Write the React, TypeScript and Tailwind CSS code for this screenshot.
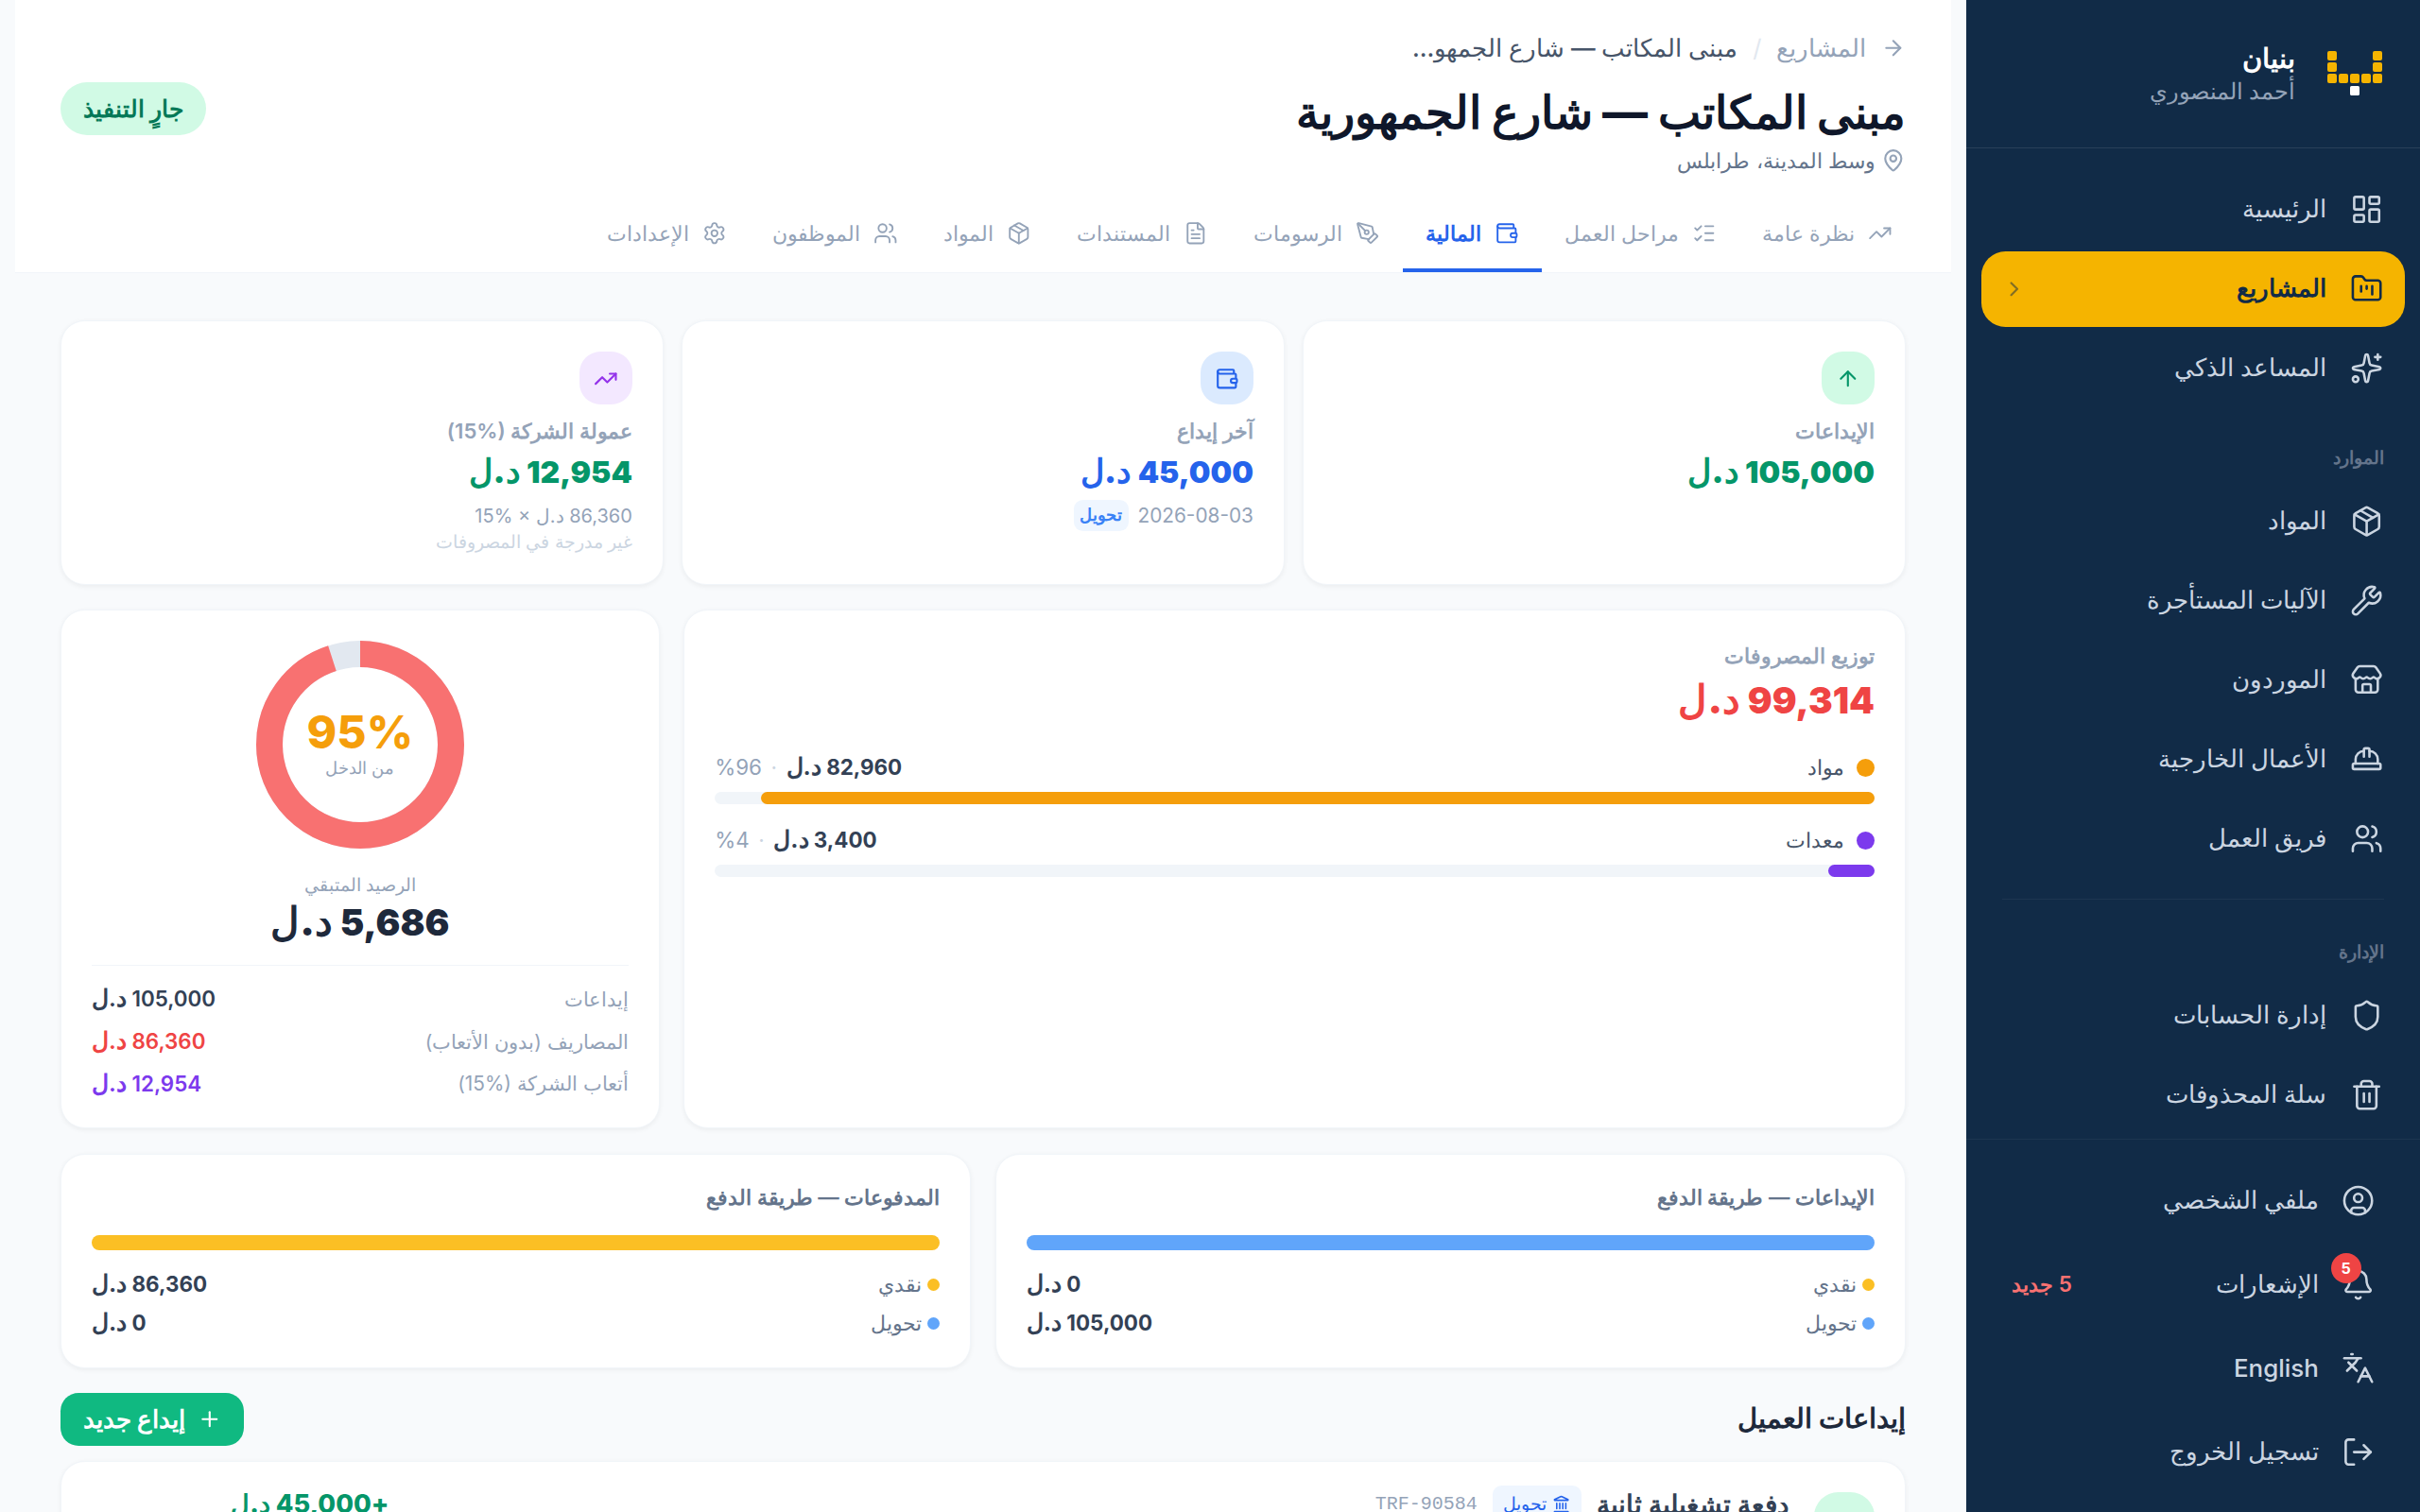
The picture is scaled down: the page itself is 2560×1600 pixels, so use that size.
import React from 'react';
import {
  ArrowRight, ArrowUp, Bell, ChevronRight, CircleUser, FileText, FolderKanban, HardHat, Landmark,
  Languages, LayoutDashboard, ListChecks, LogOut, MapPin, Package, PenTool, Plus, Settings, Shield,
  Sparkles, Store, Trash2, TrendingUp, Users, Wallet, Wrench,
} from 'lucide-react';

const tabs = [
  { label: 'نظرة عامة', icon: TrendingUp },
  { label: 'مراحل العمل', icon: ListChecks },
  { label: 'المالية', icon: Wallet, active: true },
  { label: 'الرسومات', icon: PenTool },
  { label: 'المستندات', icon: FileText },
  { label: 'المواد', icon: Package },
  { label: 'الموظفون', icon: Users },
  { label: 'الإعدادات', icon: Settings },
];

const Amount = ({ value }: { value: string }) => (
  <>
    {value} <span className="text-[1.1em] leading-none">د.ل</span>
  </>
);

const NavItem = ({ icon: Icon, label, active }: { icon: React.ElementType; label: string; active?: boolean }) => (
  <div
    className={`flex h-[50px] items-center gap-4 rounded-2xl px-3.5 text-[16.2px] ${
      active ? 'bg-[#f5b400] font-semibold text-[#112b47]' : 'font-medium text-[#cbd5e1]'
    }`}
  >
    <Icon className="h-[22px] w-[22px] shrink-0" strokeWidth={1.75} />
    <span className="flex-1">{label}</span>
    {active && <ChevronRight className="h-4 w-4 opacity-50" />}
  </div>
);

const Logo = () => (
  <svg viewBox="0 0 58 47" className="h-[29.4px] w-[36.25px] shrink-0">
    {[[0, 0], [48, 0], [0, 12], [48, 12], [0, 24], [12, 24], [24, 24], [36, 24], [48, 24]].map(([x, y]) => (
      <rect key={`${x}-${y}`} x={x} y={y} width="10" height="10" rx="2" fill="#f5b400" />
    ))}
    <rect x="24" y="37" width="10" height="10" rx="1.5" fill="#fff" />
  </svg>
);

const Sidebar = () => (
  <aside className="flex w-[300px] shrink-0 flex-col bg-[#112b47]">
    <div className="flex h-[98px] items-center gap-[21px] border-b border-white/10 px-[25px]">
      <Logo />
      <div>
        <div className="text-lg leading-6 font-bold text-white">بنيان</div>
        <div className="text-[14.7px] leading-5 text-[#94a3b8]">أحمد المنصوري</div>
      </div>
    </div>

    <nav className="flex flex-col gap-[2.5px] px-2.5 pt-[15.5px]">
      <NavItem icon={LayoutDashboard} label="الرئيسية" />
      <NavItem icon={FolderKanban} label="المشاريع" active />
      <NavItem icon={Sparkles} label="المساعد الذكي" />

      <div className="mb-[6px] mt-6 px-3.5 text-xs font-semibold text-[#64748b]">الموارد</div>
      <NavItem icon={Package} label="المواد" />
      <NavItem icon={Wrench} label="الآليات المستأجرة" />
      <NavItem icon={Store} label="الموردون" />
      <NavItem icon={HardHat} label="الأعمال الخارجية" />
      <NavItem icon={Users} label="فريق العمل" />

      <div className="mx-3.5 mt-[12.5px] border-t border-white/5" />
      <div className="mb-[6.5px] mt-6 px-3.5 text-xs font-semibold text-[#64748b]">الإدارة</div>
      <NavItem icon={Shield} label="إدارة الحسابات" />
      <NavItem icon={Trash2} label="سلة المحذوفات" />
    </nav>

    <div className="mt-1 flex flex-col gap-[5.4px] border-t border-white/5 px-2.5 pt-[15.5px]">
      <div className="flex h-[50px] items-center gap-[15px] px-5 text-[16.2px] font-medium text-[#cbd5e1]">
        <CircleUser className="h-[22px] w-[22px]" strokeWidth={1.75} />
        <span>ملفي الشخصي</span>
      </div>
      <div className="flex h-[50px] items-center gap-[15px] px-5 text-[16.2px] font-medium text-[#cbd5e1]">
        <span className="relative">
          <Bell className="h-[22px] w-[22px]" strokeWidth={1.75} />
          <span className="absolute -top-2.5 right-[9px] flex h-5 w-5 items-center justify-center rounded-full bg-[#ef4444] text-[10px] font-bold text-white">5</span>
        </span>
        <span className="flex-1">الإشعارات</span>
        <span className="text-sm font-semibold text-[#f87171]">5 جديد</span>
      </div>
      <div className="flex h-[50px] items-center gap-[15px] px-5 text-[16.2px] font-medium text-[#cbd5e1]">
        <Languages className="h-[22px] w-[22px]" strokeWidth={1.75} />
        <span>English</span>
      </div>
      <div className="flex h-[50px] items-center gap-[15px] px-5 text-[16.2px] font-medium text-[#cbd5e1]">
        <LogOut className="h-[22px] w-[22px]" strokeWidth={1.75} />
        <span>تسجيل الخروج</span>
      </div>
    </div>
  </aside>
);

const Header = () => (
  <header className="border-b border-[#f1f5f9] bg-white px-[30px]">
    <div className="flex items-center justify-between pt-5">
      <div>
        <div className="flex items-center gap-2.5 text-base text-[#94a3b8]">
          <ArrowRight className="h-4 w-4" />
          <span>المشاريع</span>
          <span className="text-[#e2e8f0]">/</span>
          <span className="font-medium text-[#475569]">مبنى المكاتب — شارع الجمهو...</span>
        </div>
        <h1 className="mt-3 text-3xl leading-9 font-extrabold text-[#0f172a]">مبنى المكاتب — شارع الجمهورية</h1>
        <div className="mt-1 flex items-center gap-1 text-sm text-[#64748b]">
          <MapPin className="h-4 w-4 text-[#94a3b8]" />
          <span>وسط المدينة، طرابلس</span>
        </div>
      </div>
      <span className="mt-2 flex h-[35px] items-center rounded-full bg-[#d1fae5] px-[15px] text-[15.5px] font-bold text-[#047857]">جارٍ التنفيذ</span>
    </div>
    <div className="-mr-[6px] mt-[15px] flex">
      {tabs.map(({ label, icon: Icon, active }) => (
        <div
          key={label}
          className={`flex h-[49px] items-center gap-[9px] border-b-[2.5px] px-[15px] text-sm ${
            active ? 'border-[#2563eb] font-semibold text-[#2563eb]' : 'border-transparent font-medium text-[#94a3b8]'
          }`}
        >
          <Icon className="h-4 w-4" strokeWidth={1.75} />
          <span>{label}</span>
        </div>
      ))}
    </div>
  </header>
);

const Card = ({ className = '', children }: { className?: string; children: React.ReactNode }) => (
  <div className={`rounded-2xl border border-[#f1f5f9] bg-white p-5 shadow-[0_1px_3px_rgba(0,0,0,0.05)] ${className}`}>{children}</div>
);

const StatCard = ({ icon: Icon, iconBox, label, value, valueColor, children }: {
  icon: React.ElementType; iconBox: string; label: string; value: string; valueColor: string; children?: React.ReactNode;
}) => (
  <Card className="h-[175px]">
    <div className={`mb-[7px] flex h-[35px] w-[35px] items-center justify-center rounded-[14px] ${iconBox}`}>
      <Icon className="h-4 w-4" />
    </div>
    <div className="text-[13.8px] leading-5 font-semibold text-[#94a3b8]">{label}</div>
    <div className={`mt-1 text-xl font-black ${valueColor}`}><Amount value={value} /></div>
    {children}
  </Card>
);

const Donut = () => (
  <div className="relative mx-auto h-[137.5px] w-[137.5px]">
    <svg viewBox="0 0 220 220" className="h-full w-full -rotate-90">
      <circle cx="110" cy="110" r="96" fill="none" stroke="#e2e8f0" strokeWidth="28" />
      <circle cx="110" cy="110" r="96" fill="none" stroke="#f87171" strokeWidth="28" pathLength="100" strokeDasharray="95 5" />
    </svg>
    <div className="absolute inset-0 flex flex-col items-center justify-center">
      <span className="text-3xl leading-8 font-extrabold text-[#f59e0b]">95%</span>
      <span className="text-[11px] text-[#94a3b8]">من الدخل</span>
    </div>
  </div>
);

const ExpenseRow = ({ dot, label, value, pct, width }: { dot: string; label: string; value: string; pct: string; width: string }) => (
  <div>
    <div className="flex items-center justify-between">
      <div className="flex items-center gap-2 text-sm text-[#475569]">
        <span className={`h-3 w-3 rounded-full ${dot}`} />
        {label}
      </div>
      <div className="flex items-center gap-1.5 text-sm">
        <span className="font-bold text-[#334155]"><Amount value={value} /></span>
        <span className="text-[#cbd5e1]">·</span>
        <span className="text-[#94a3b8]">{pct}</span>
      </div>
    </div>
    <div className="mt-1.5 h-2 rounded-full bg-[#f1f5f9]">
      <div className={`h-2 rounded-full ${dot} ${width}`} />
    </div>
  </div>
);

const MethodCard = ({ title, bar, cash, transfer }: { title: string; bar: string; cash: string; transfer: string }) => (
  <Card className="h-[142px]">
    <div className="-mt-0.5 text-sm font-semibold text-[#64748b]">{title}</div>
    <div className={`mt-[15px] h-2.5 rounded-full ${bar}`} />
    <div className="mt-2.5 flex flex-col">
      <div className="flex h-[25.6px] items-center justify-between">
        <div className="flex items-center gap-1 text-sm text-[#64748b]">
          <span className="h-2 w-2 rounded-full bg-[#fbbf24]" />
          نقدي
        </div>
        <span className="text-sm font-bold text-[#334155]"><Amount value={cash} /></span>
      </div>
      <div className="flex h-[25.6px] items-center justify-between">
        <div className="flex items-center gap-1 text-sm text-[#64748b]">
          <span className="h-2 w-2 rounded-full bg-[#60a5fa]" />
          تحويل
        </div>
        <span className="text-sm font-bold text-[#334155]"><Amount value={transfer} /></span>
      </div>
    </div>
  </Card>
);

export default function App() {
  return (
    <div dir="rtl" className="flex h-[1000px] w-[1600px] overflow-hidden bg-[#f8fafc] font-[Inter,'Noto_Sans',sans-serif] [zoom:1.6]">
      <Sidebar />
      <main className="min-w-0 flex-1 overflow-hidden px-2.5">
        <Header />
        <div className="px-[30px] pt-[31.5px]">
          <div className="grid grid-cols-3 gap-3">
            <StatCard icon={ArrowUp} iconBox="bg-[#d1fae5] text-[#059669]" label="الإيداعات" value="105,000" valueColor="text-[#059669]" />
            <StatCard icon={Wallet} iconBox="bg-[#dbeafe] text-[#2563eb]" label="آخر إيداع" value="45,000" valueColor="text-[#2563eb]">
              <div className="mt-1 flex items-center gap-1.5 text-[13px] text-[#94a3b8]">
                <span>2026-08-03</span>
                <span className="rounded-md bg-[#eff6ff] px-1 py-0.5 text-[11px] font-semibold text-[#3b82f6]">تحويل</span>
              </div>
            </StatCard>
            <StatCard icon={TrendingUp} iconBox="bg-[#f3e8ff] text-[#9333ea]" label="عمولة الشركة (%15)" value="12,954" valueColor="text-[#059669]">
              <div className="mt-[5px] text-[12.5px] text-[#94a3b8]">86,360 د.ل × %15</div>
              <div className="text-[11.8px] leading-4 text-[#cbd5e1]">غير مدرجة في المصروفات</div>
            </StatCard>
          </div>

          <div className="mt-4 grid h-[343px] grid-cols-3 grid-rows-[343px] gap-4">
            <Card className="col-span-2">
              <div className="text-sm font-semibold text-[#94a3b8]">توزيع المصروفات</div>
              <div className="mt-1 text-2xl font-black text-[#ef4444]"><Amount value="99,314" /></div>
              <div className="mt-[18px] flex flex-col gap-3.5">
                <ExpenseRow dot="bg-[#f59e0b]" label="مواد" value="82,960" pct="%96" width="w-[96%]" />
                <ExpenseRow dot="bg-[#7c3aed]" label="معدات" value="3,400" pct="%4" width="w-[4%]" />
              </div>
            </Card>
            <Card>
              <Donut />
              <div className="mt-4 text-center text-xs text-[#94a3b8]">الرصيد المتبقي</div>
              <div className="mt-px text-center text-2xl font-black text-[#1e293b]"><Amount value="5,686" /></div>
              <div className="mt-3 border-t border-[#f1f5f9] pt-2">
                <div className="flex h-7 items-center justify-between text-[13px]">
                  <span className="text-[#94a3b8]">إيداعات</span>
                  <span className="text-sm font-semibold text-[#334155]"><Amount value="105,000" /></span>
                </div>
                <div className="flex h-7 items-center justify-between text-[13px]">
                  <span className="text-[#94a3b8]">المصاريف (بدون الأتعاب)</span>
                  <span className="text-sm font-semibold text-[#ef4444]"><Amount value="86,360" /></span>
                </div>
                <div className="flex h-7 items-center justify-between text-[13px]">
                  <span className="text-[#94a3b8]">أتعاب الشركة (%15)</span>
                  <span className="text-sm font-semibold text-[#7c3aed]"><Amount value="12,954" /></span>
                </div>
              </div>
            </Card>
          </div>

          <div className="mt-[17px] grid grid-cols-2 gap-4">
            <MethodCard title="الإيداعات — طريقة الدفع" bar="bg-[#60a5fa]" cash="0" transfer="105,000" />
            <MethodCard title="المدفوعات — طريقة الدفع" bar="bg-[#fbbf24]" cash="86,360" transfer="0" />
          </div>

          <div className="mt-4 flex items-center justify-between">
            <h2 className="text-lg font-bold text-[#1e293b]">إيداعات العميل</h2>
            <button className="flex h-[35px] items-center gap-2 rounded-xl bg-[#10b981] px-[15px] text-base font-bold text-white">
              <Plus className="h-4 w-4" />
              إيداع جديد
            </button>
          </div>

          <div className="mt-2.5 flex rounded-2xl border border-[#f1f5f9] bg-white p-5 shadow-[0_1px_3px_rgba(0,0,0,0.05)]">
            <div className="flex flex-1 gap-[17px]">
              <div className="h-10 w-10 shrink-0 rounded-2xl bg-[#d1fae5]" />
              <div className="-mt-1 flex h-6 items-center gap-2.5">
                <span className="text-[17.5px] font-semibold text-[#334155]">دفعة تشغيلية ثانية</span>
                <span className="flex items-center gap-1 rounded-md bg-[#eff6ff] px-[7px] py-1 text-xs font-medium text-[#2563eb]">
                  <Landmark className="h-3 w-3" />
                  تحويل
                </span>
                <span className="font-mono text-[12.5px] text-[#94a3b8]">TRF-90584</span>
              </div>
            </div>
            <div className="-mt-1 ml-[92px] text-[17px] font-extrabold text-[#059669]">+45,000 د.ل</div>
          </div>
        </div>
      </main>
    </div>
  );
}
